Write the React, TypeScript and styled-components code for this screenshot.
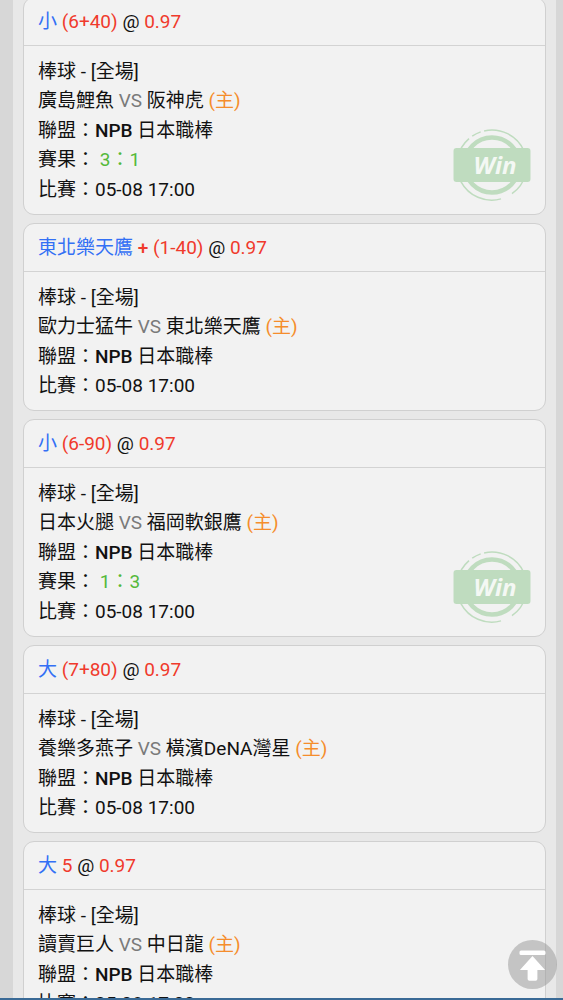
import React from 'react';
import styled, { createGlobalStyle } from 'styled-components';

const GlobalStyle = createGlobalStyle`
  *, *::before, *::after { box-sizing: border-box; }
  body {
    margin: 0;
    background: #d7d7d7;
    color: #111;
    font-family: Roboto, "Noto Sans CJK TC", sans-serif;
    font-size: 19px;
    line-height: 29px;
  }
`;

const Screen = styled.div`
  display: flex;
  flex-direction: column;
  height: 100vh;
  border-bottom: 2px solid #3a6a96;
`;

const Scroller = styled.main`
  flex: 1;
  min-height: 0;
  overflow-y: auto;
  scrollbar-width: none;
  padding: 0 7px 0 13px;
`;

const BetList = styled.div`
  display: flex;
  flex-direction: column;
  gap: 8px;
  margin-top: -3px;
  padding: 0 10px;
  background: #e8e8e8;
`;

const Card = styled.article`
  position: relative;
  flex: none;
  background: #f2f2f2;
  border: 1px solid #d0d0d0;
  border-radius: 11px;
`;

const CardHeader = styled.h2`
  margin: 0;
  padding: 9px 14px;
  border-bottom: 1px solid #d3d3d3;
  font-size: 19px;
  font-weight: 400;
  line-height: 29px;
`;

const CardBody = styled.div`
  padding: 11px 14px 10px;
`;

const Line = styled.p<{ $spaced?: boolean }>`
  margin: 0;
  padding-bottom: ${(p) => (p.$spaced ? '1px' : '0')};
  white-space: nowrap;
`;

const tones = {
  pick: '#3370f5',
  odds: '#f03a2c',
  muted: '#7a7a7a',
  home: '#f58d2c',
  score: '#55b93a',
};

const Tone = styled.span<{ $tone: keyof typeof tones; $strong?: boolean }>`
  color: ${(p) => tones[p.$tone]};
  font-weight: ${(p) => (p.$strong ? 500 : 400)};
`;

const League = styled.span`
  font-weight: 500;
`;

const Stamp = styled.svg`
  position: absolute;
  right: 14px;
  bottom: 13px;
  width: 78px;
  height: 72px;
`;

const TopButton = styled.button`
  position: fixed;
  right: 6px;
  bottom: 11px;
  width: 49px;
  height: 49px;
  padding: 0;
  border: 0;
  border-radius: 50%;
  background: rgba(150, 150, 150, 0.5);
  cursor: pointer;

  svg { display: block; }
`;

type Bet = {
  pick: string;
  sign?: string;
  line: string;
  away: string;
  home: string;
  score?: string;
};

const bets: Bet[] = [
  { pick: '小', line: '(6+40)', away: '廣島鯉魚', home: '阪神虎', score: '3：1' },
  { pick: '東北樂天鷹', sign: '+', line: '(1-40)', away: '歐力士猛牛', home: '東北樂天鷹' },
  { pick: '小', line: '(6-90)', away: '日本火腿', home: '福岡軟銀鷹', score: '1：3' },
  { pick: '大', line: '(7+80)', away: '養樂多燕子', home: '橫濱DeNA灣星' },
  { pick: '大', line: '5', away: '讀賣巨人', home: '中日龍' },
];

const WinStamp = () => (
  <Stamp viewBox="-39 -36 78 72" role="img" aria-label="Win">
    <g fill="none" stroke="#bfdcbf">
      <circle r="27.5" strokeWidth="4.5" />
      <g strokeWidth="1.5">
        <path d="M-7.9 -34.1A35 35 0 0 1 20 28.7" />
        <path d="M9 33.9A35 35 0 0 1 -23 -26.4" />
        <path d="M-19.8 -28.8A35 35 0 0 1 -11.3 -33.1" />
      </g>
    </g>
    <rect x="-38.5" y="-17" width="77" height="34" rx="3" fill="#bfdcbf" />
    <text
      x="3"
      y="9"
      textAnchor="middle"
      fill="#f4f8f4"
      fontFamily='"Open Sans", "Noto Sans", sans-serif'
      fontSize="24"
      fontStyle="italic"
      fontWeight="700"
    >
      Win
    </text>
  </Stamp>
);

const BetCard = ({ bet }: { bet: Bet }) => (
  <Card>
    <CardHeader>
      <Tone $tone="pick">{bet.pick}</Tone>{' '}
      {bet.sign && <><Tone $tone="odds" $strong>{bet.sign}</Tone>{' '}</>}
      <Tone $tone="odds">{bet.line}</Tone> @ <Tone $tone="odds">0.97</Tone>
    </CardHeader>
    <CardBody>
      <Line>棒球 - [全場]</Line>
      <Line $spaced>
        {bet.away} <Tone $tone="muted">VS</Tone> {bet.home} <Tone $tone="home">(主)</Tone>
      </Line>
      <Line>聯盟：<League>NPB</League> 日本職棒</Line>
      {bet.score && (
        <Line $spaced>賽果： <Tone $tone="score">{bet.score}</Tone></Line>
      )}
      <Line>比賽：05-08 17:00</Line>
    </CardBody>
    {bet.score && <WinStamp />}
  </Card>
);

export default function App() {
  const scroller = React.useRef<HTMLElement>(null);
  return (
    <Screen>
      <GlobalStyle />
      <Scroller ref={scroller}>
        <BetList>
          {bets.map((bet) => <BetCard key={bet.away} bet={bet} />)}
        </BetList>
      </Scroller>
      <TopButton
        type="button"
        aria-label="回到頂部"
        onClick={() => scroller.current?.scrollTo({ top: 0, behavior: 'smooth' })}
      >
        <svg width="49" height="49" viewBox="-24.5 -24.5 49 49" fill="#fff" aria-hidden="true">
          <rect x="-13" y="-14" width="26" height="4.4" rx="1.5" />
          <path d="M0 -8.5L12.6 5.5H4.9V14.5Q4.9 16.3 3.1 16.3H-3.1Q-4.9 16.3 -4.9 14.5V5.5H-12.6Z" />
        </svg>
      </TopButton>
    </Screen>
  );
}
